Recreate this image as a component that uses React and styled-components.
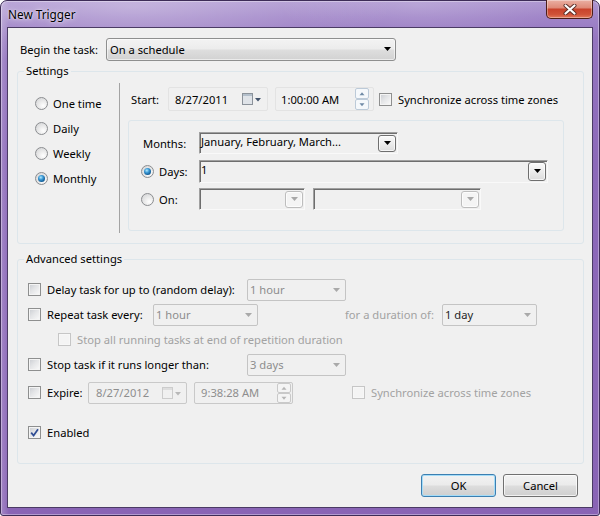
import React from "react";
import styled, { createGlobalStyle } from "styled-components";

const Global = createGlobalStyle`
  html, body { margin: 0; padding: 0; background: #fff; }
  body {
    font-family: "Noto Sans", "Open Sans", sans-serif;
    font-size: 11.2px;
    color: #000;
  }
  *, *::before, *::after { box-sizing: border-box; }
`;

const Window = styled.div`
  width: 600px;
  height: 516px;
  display: flex;
  flex-direction: column;
  padding: 0 6px 7px;
  border: 1px solid #3d2c57;
  border-radius: 7px 7px 3px 3px;
  background:
    radial-gradient(ellipse 260px 60px at 22% 6px, rgba(255, 255, 255, 0.3), transparent),
    radial-gradient(ellipse 140px 40px at 70% 4px, rgba(255, 255, 255, 0.16), transparent),
    linear-gradient(90deg, rgba(255, 255, 255, 0.22) 0px, rgba(255, 255, 255, 0) 8px),
    linear-gradient(180deg, #ae97d1 0px, #a085c8 16px, #9475bf 40px, #8c69b9 160px, #8964b5 100%);
  box-shadow: inset 0 0 0 1px rgba(255, 255, 255, 0.35);
`;

const TitleBar = styled.div`
  height: 26px;
  flex: none;
  display: flex;
  align-items: flex-start;
  justify-content: space-between;
`;

const Title = styled.span`
  margin-top: 5px;
  padding-left: 1px;
  line-height: 16px;
  font-size: 11.8px;
  color: #000;
  text-shadow: 0 0 6px rgba(255, 255, 255, 0.9), 0 0 2px rgba(255, 255, 255, 0.8);
`;

const CloseButton = styled.div`
  margin-top: -1px;
  width: 47px;
  height: 19px;
  display: flex;
  align-items: center;
  justify-content: center;
  border: 1px solid #4c1d18;
  border-top: none;
  border-radius: 0 0 5px 5px;
  background: linear-gradient(180deg, #eab0a3 0%, #df8b79 42%, #c9432c 52%, #cf5238 80%, #e27a5c 100%);
  box-shadow: inset 0 0 0 1px rgba(255, 255, 255, 0.35);
`;

const Client = styled.div`
  flex: 1;
  display: flex;
  flex-direction: column;
  border: 1px solid #4b3b64;
  background: #f0f0f0;
  padding: 10px 8px 10px 9px;
`;

const BeginRow = styled.div`
  display: flex;
  align-items: center;
  height: 22px;
  padding-left: 3px;
`;

const Label = styled.span`
  flex: none;
  white-space: nowrap;
  width: ${(p) => (p.$w ? `${p.$w}px` : "auto")};
  margin-left: ${(p) => p.$ml || 0}px;
  color: ${(p) => (p.$disabled ? "#a2a2a2" : "#000")};
`;

const BigCombo = styled.div`
  width: 290px;
  height: 23px;
  display: flex;
  align-items: center;
  justify-content: space-between;
  padding: 0 4px 0 3px;
  border: 1px solid #8e8f8f;
  border-radius: 3px;
  background: linear-gradient(180deg, #f3f3f3 0%, #ececec 48%, #dedede 52%, #d2d2d2 100%);
  box-shadow: inset 0 0 0 1px rgba(255, 255, 255, 0.55);
`;

const Group = styled.fieldset`
  margin: ${(p) => p.$mt}px 0 0;
  padding: 0;
  min-width: 0;
  border: 1px solid #dde6eb;
  border-radius: 3px;
`;

const Legend = styled.legend`
  margin-left: 6px;
  padding: 0 2px;
  line-height: 14px;
`;

const SettingsBody = styled.div`
  display: flex;
  padding: 5px 0 10px;
`;

const RadioColumn = styled.div`
  width: 101px;
  flex: none;
  padding: 8px 0 0 17px;
`;

const RadioRow = styled.div`
  display: flex;
  align-items: center;
  gap: 5px;
  height: 25px;
`;

const Radio = styled.span`
  flex: none;
  width: 13px;
  height: 13px;
  border-radius: 50%;
  border: 1px solid #8b8d90;
  background: radial-gradient(circle at 65% 70%, #ffffff 0%, #eeeeee 35%, #cfd0d2 100%);
  display: flex;
  align-items: center;
  justify-content: center;
  &::after {
    content: "";
    display: ${(p) => (p.$checked ? "block" : "none")};
    width: 7px;
    height: 7px;
    border-radius: 50%;
    background: radial-gradient(circle at 40% 35%, #b4ecff 0%, #3d9ad6 35%, #0c5690 75%, #083f6e 100%);
  }
`;

const VSep = styled.div`
  width: 1px;
  flex: none;
  background: #a3a3a3;
`;

const ScheduleColumn = styled.div`
  display: flex;
  flex-direction: column;
  padding: 0 0 2px 8px;
`;

const StartRow = styled.div`
  display: flex;
  align-items: center;
  height: 24px;
  margin: 4px 0 0 3px;
`;

const PickerBox = styled.div`
  flex: none;
  width: ${(p) => p.$w}px;
  height: ${(p) => p.$h || 22}px;
  margin-left: ${(p) => p.$ml || 0}px;
  display: flex;
  align-items: center;
  justify-content: space-between;
  padding: 0 ${(p) => p.$pr || 4}px 0 ${(p) => p.$pl || 6}px;
  border: 1px solid ${(p) => (p.$disabled ? "#c9c9c9" : "#e3e3e3")};
  border-radius: 2px;
  color: ${(p) => (p.$disabled ? "#8e8e8e" : "#000")};
`;

const CheckBox = styled.span`
  flex: none;
  width: 13px;
  height: 13px;
  margin-left: ${(p) => p.$ml || 0}px;
  display: flex;
  align-items: center;
  justify-content: center;
  border: 1px solid ${(p) => (p.$disabled ? "#c6c6c6" : "#8e8f8f")};
  background: ${(p) =>
    p.$disabled
      ? "#f4f4f4"
      : "linear-gradient(135deg, #c9ccd1 0%, #e4e5e7 45%, #fbfbfb 100%)"};
  box-shadow: inset 0 0 0 1px ${(p) => (p.$disabled ? "#f7f7f7" : "#f4f4f4")};
`;

const InnerGroup = styled.div`
  margin-top: 9px;
  width: 436px;
  border: 1px solid #dde6eb;
  border-radius: 3px;
  padding: 11px 0 20px 12px;
`;

const ScheduleGrid = styled.div`
  display: grid;
  grid-template-columns: 58px auto;
  grid-auto-rows: 22px;
  row-gap: 6px;
  align-items: center;
`;

const Sunken = styled.div`
  width: ${(p) => p.$w}px;
  height: ${(p) => p.$h || 22}px;
  margin-left: ${(p) => p.$ml || 0}px;
  display: flex;
  justify-content: space-between;
  align-items: center;
  padding-right: 1px;
  border-style: solid;
  border-width: 1px;
  border-color: #a0a0a0 #f9f9f9 #f9f9f9 #a0a0a0;
  box-shadow: inset 1px 1px 0 #6e6e6e;
`;

const FieldText = styled.span`
  align-self: flex-start;
  padding-left: 1px;
  line-height: 17px;
  white-space: nowrap;
`;

const FieldRow = styled.div`
  display: flex;
  align-items: center;
`;

const DropBtn = styled.span`
  flex: none;
  width: 18px;
  height: ${(p) => p.$h || 17}px;
  display: flex;
  align-items: center;
  justify-content: center;
  border: 1px solid ${(p) => (p.$disabled ? "#bdbdbd" : "#6f6f6f")};
  border-radius: 3px;
  background: ${(p) =>
    p.$disabled ? "#f4f4f4" : "linear-gradient(180deg, #fafafa 0%, #ececec 50%, #dcdcdc 100%)"};
  box-shadow: inset 0 0 0 1px rgba(255, 255, 255, 0.7);
`;

const AdvBody = styled.div`
  padding: 11px 0 18px 10px;
`;

const AdvRow = styled.div`
  display: flex;
  align-items: center;
  height: 25px;
  margin-top: ${(p) => p.$mt || 0}px;
  padding-left: ${(p) => p.$indent || 0}px;
`;

const FlatCombo = styled.div`
  flex: none;
  width: ${(p) => p.$w}px;
  height: 22px;
  display: flex;
  align-items: center;
  justify-content: space-between;
  padding: 0 5px 0 2px;
  border: 1px solid #c4c4c4;
  border-radius: 2px;
  color: ${(p) => (p.$dark ? "#1f1f1f" : "#8d8d8d")};
`;

const ButtonRow = styled.div`
  display: flex;
  justify-content: flex-end;
  gap: 7px;
  margin-top: 10px;
  padding-right: 6px;
`;

const Button = styled.button`
  width: 75px;
  height: 23px;
  padding: 0;
  font: inherit;
  color: #000;
  border: 1px solid ${(p) => (p.$focus ? "#3c7fb1" : "#707070")};
  border-radius: 3px;
  background: linear-gradient(180deg, #f2f2f2 0%, #ebebeb 48%, #dddddd 52%, #cfcfcf 100%);
  box-shadow: inset 0 0 0 1px ${(p) => (p.$focus ? "#a4dcf8" : "rgba(255,255,255,0.7)")};
`;

const Arrow = ({ color = "#000", w = 7, h = 4 }) => (
  <svg width={w} height={h} viewBox="0 0 7 4">
    <path d="M0 0h7L3.5 4z" fill={color} />
  </svg>
);

const CalendarIcon = ({ disabled }) => (
  <svg width="20" height="12" viewBox="0 0 20 12">
    <rect x="0.5" y="0.5" width="10" height="11" fill={disabled ? "#f0f0f0" : "#dfe3e8"} stroke={disabled ? "#cccccc" : "#8b929a"} />
    <rect x="1" y="1" width="9" height="2" fill={disabled ? "#dedede" : "#b3bfcb"} />
    <path d="M13 5h6l-3 3.5z" fill={disabled ? "#b8b8b8" : "#43536b"} />
  </svg>
);

const SpinIcon = ({ disabled, h = 22 }) => {
  const half = (h - 1) / 2;
  const stroke = disabled ? "#c9c9c9" : "#bccad8";
  const fill = disabled ? "#f4f4f4" : "#f5f8fb";
  const tri = disabled ? "#b5b5b5" : "#6f8aa6";
  return (
    <svg width="14" height={h} viewBox={`0 0 14 ${h}`}>
      <rect x="0.5" y="0.5" width="13" height={half - 0.5} rx="1.5" fill={fill} stroke={stroke} />
      <rect x="0.5" y={half + 1} width="13" height={half - 0.5} rx="1.5" fill={fill} stroke={stroke} />
      <path d={`M4.5 ${half / 2 + 2}h5L7 ${half / 2 - 1}z`} fill={tri} />
      <path d={`M4.5 ${half + 1 + half / 2 - 1.5}h5L7 ${half + 1 + half / 2 + 1.5}z`} fill={tri} />
    </svg>
  );
};

const CheckMark = () => (
  <svg width="11" height="11" viewBox="0 0 11 11">
    <path d="M2.2 5.6 L4.6 8.6 L9 2.2" stroke="#2f4d94" strokeWidth="1.7" fill="none" />
  </svg>
);

const CloseX = () => (
  <svg width="14" height="11" viewBox="0 0 14 11">
    <path d="M2.5 1.5 L11.5 9.5 M11.5 1.5 L2.5 9.5" stroke="#5a2c26" strokeWidth="4" strokeLinecap="round" />
    <path d="M2.5 1.5 L11.5 9.5 M11.5 1.5 L2.5 9.5" stroke="#ffffff" strokeWidth="2.2" strokeLinecap="round" />
  </svg>
);

export default function App() {
  return (
    <>
      <Global />
      <Window>
        <TitleBar>
          <Title>New Trigger</Title>
          <CloseButton>
            <CloseX />
          </CloseButton>
        </TitleBar>
        <Client>
          <BeginRow>
            <Label $w={86}>Begin the task:</Label>
            <BigCombo>
              <span>On a schedule</span>
              <Arrow />
            </BigCombo>
          </BeginRow>

          <Group $mt={4}>
            <Legend>Settings</Legend>
            <SettingsBody>
              <RadioColumn>
                <RadioRow>
                  <Radio />
                  <span>One time</span>
                </RadioRow>
                <RadioRow>
                  <Radio />
                  <span>Daily</span>
                </RadioRow>
                <RadioRow>
                  <Radio />
                  <span>Weekly</span>
                </RadioRow>
                <RadioRow>
                  <Radio $checked />
                  <span>Monthly</span>
                </RadioRow>
              </RadioColumn>
              <VSep />
              <ScheduleColumn>
                <StartRow>
                  <Label $w={37}>Start:</Label>
                  <PickerBox $w={100} $h={24} $pl={6} $pr={5}>
                    <span>8/27/2011</span>
                    <CalendarIcon />
                  </PickerBox>
                  <PickerBox $w={99} $h={24} $ml={7} $pl={5} $pr={4}>
                    <span>1:00:00 AM</span>
                    <SpinIcon h={22} />
                  </PickerBox>
                  <CheckBox $ml={5} />
                  <Label $ml={6}>Synchronize across time zones</Label>
                </StartRow>
                <InnerGroup>
                  <ScheduleGrid>
                    <Label $ml={2}>Months:</Label>
                    <Sunken $w={199}>
                      <FieldText>January, February, March...</FieldText>
                      <DropBtn $h={17}>
                        <Arrow />
                      </DropBtn>
                    </Sunken>

                    <RadioRow>
                      <Radio $checked />
                      <span>Days:</span>
                    </RadioRow>
                    <Sunken $w={349} $h={23}>
                      <FieldText>1</FieldText>
                      <DropBtn $h={19}>
                        <Arrow />
                      </DropBtn>
                    </Sunken>

                    <RadioRow>
                      <Radio />
                      <span>On:</span>
                    </RadioRow>
                    <FieldRow>
                      <Sunken $w={106}>
                        <FieldText />
                        <DropBtn $h={17} $disabled>
                          <Arrow color="#a8a8a8" />
                        </DropBtn>
                      </Sunken>
                      <Sunken $w={168} $ml={8}>
                        <FieldText />
                        <DropBtn $h={17} $disabled>
                          <Arrow color="#a8a8a8" />
                        </DropBtn>
                      </Sunken>
                    </FieldRow>
                  </ScheduleGrid>
                </InnerGroup>
              </ScheduleColumn>
            </SettingsBody>
          </Group>

          <Group $mt={8}>
            <Legend>Advanced settings</Legend>
            <AdvBody>
              <AdvRow>
                <CheckBox />
                <Label $ml={6} $w={200}>Delay task for up to (random delay):</Label>
                <FlatCombo $w={99}>
                  <span>1 hour</span>
                  <Arrow color="#a9a9a9" />
                </FlatCombo>
              </AdvRow>
              <AdvRow>
                <CheckBox />
                <Label $ml={6} $w={106}>Repeat task every:</Label>
                <FlatCombo $w={105}>
                  <span>1 hour</span>
                  <Arrow color="#a9a9a9" />
                </FlatCombo>
                <Label $ml={87} $w={97} $disabled>for a duration of:</Label>
                <FlatCombo $w={95} $dark>
                  <span>1 day</span>
                  <Arrow color="#a9a9a9" />
                </FlatCombo>
              </AdvRow>
              <AdvRow $indent={30}>
                <CheckBox $disabled />
                <Label $ml={6} $disabled>Stop all running tasks at end of repetition duration</Label>
              </AdvRow>
              <AdvRow>
                <CheckBox />
                <Label $ml={6} $w={200}>Stop task if it runs longer than:</Label>
                <FlatCombo $w={99}>
                  <span>3 days</span>
                  <Arrow color="#a9a9a9" />
                </FlatCombo>
              </AdvRow>
              <AdvRow $mt={3}>
                <CheckBox />
                <Label $ml={6} $w={41}>Expire:</Label>
                <PickerBox $w={99} $disabled $pl={7} $pr={4}>
                  <span>8/27/2012</span>
                  <CalendarIcon disabled />
                </PickerBox>
                <PickerBox $w={99} $ml={7} $disabled $pl={6} $pr={1}>
                  <span>9:38:28 AM</span>
                  <SpinIcon disabled h={20} />
                </PickerBox>
                <CheckBox $ml={59} $disabled />
                <Label $ml={6} $disabled>Synchronize across time zones</Label>
              </AdvRow>
              <AdvRow $mt={15}>
                <CheckBox>
                  <CheckMark />
                </CheckBox>
                <Label $ml={6}>Enabled</Label>
              </AdvRow>
            </AdvBody>
          </Group>

          <ButtonRow>
            <Button $focus>OK</Button>
            <Button>Cancel</Button>
          </ButtonRow>
        </Client>
      </Window>
    </>
  );
}
